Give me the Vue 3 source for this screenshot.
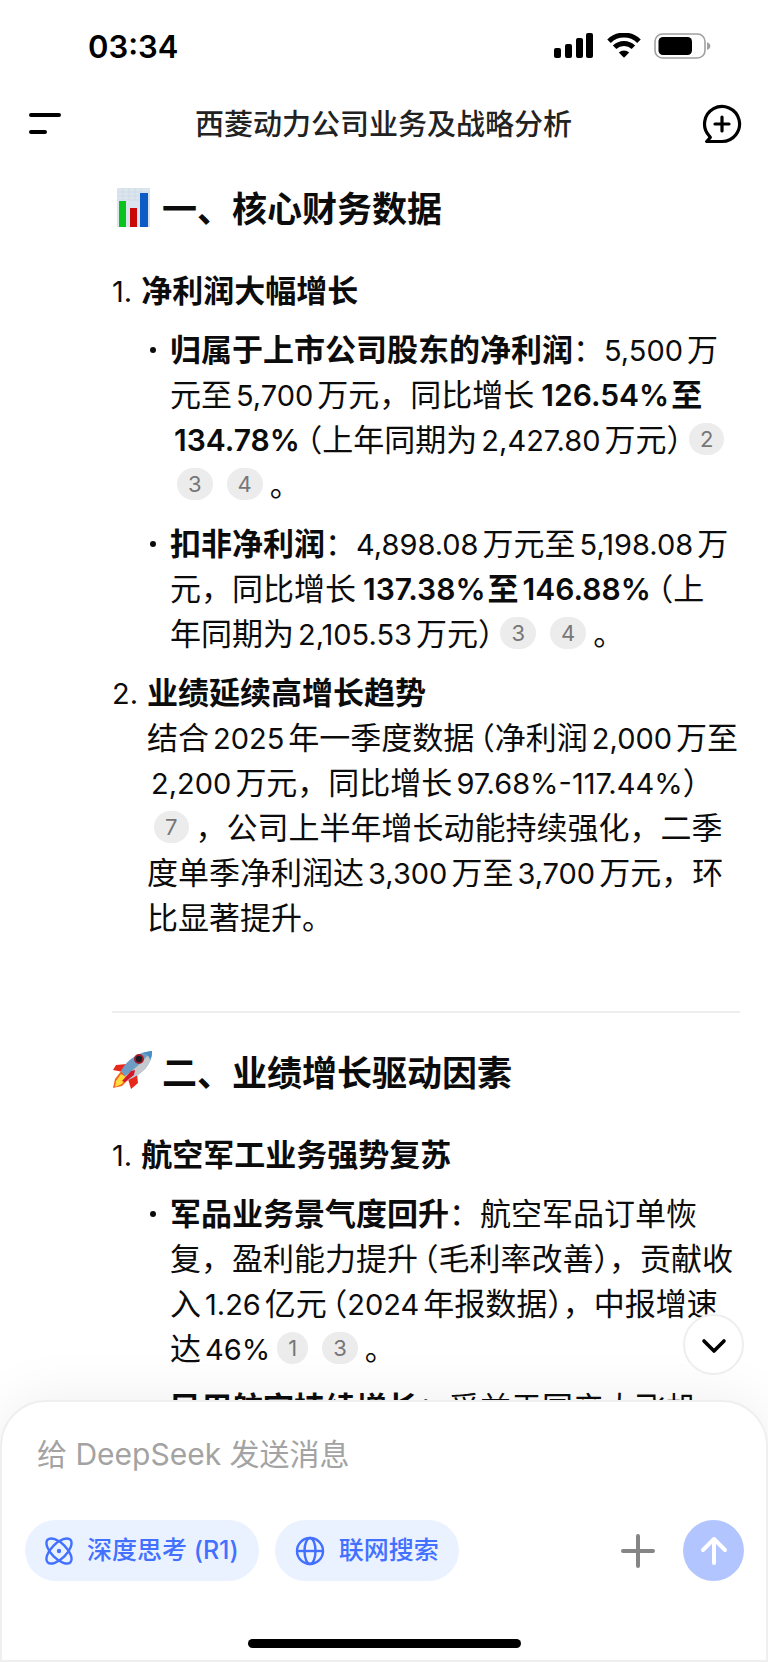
<script setup>
import { ref } from 'vue'

const draft = ref('')
</script>

<template>
  <div class="screen">
    <div class="status">
      <span class="time">03:34</span>
      <div class="indicators">
        <svg width="40" height="26" viewBox="0 0 40 26" aria-hidden="true">
          <rect x="0" y="15" width="7" height="10" rx="2" />
          <rect x="11" y="11" width="7" height="14" rx="2" />
          <rect x="22" y="5" width="7" height="20" rx="2" />
          <rect x="32" y="0" width="7" height="25" rx="2" />
        </svg>
        <svg width="36" height="26" viewBox="0 0 36 26" aria-hidden="true">
          <path d="M3 8.2a21.5 21.5 0 0 1 30 0M8.6 14.2a13.5 13.5 0 0 1 18.8 0" fill="none" stroke="#000" stroke-width="5" />
          <path d="M18 24.8l-5.2-5.2a7.6 7.6 0 0 1 10.4 0z" />
        </svg>
        <svg width="58" height="26" viewBox="0 0 58 26" aria-hidden="true">
          <rect x="1" y="1" width="50" height="24" rx="7.5" fill="none" stroke="#a0a0a0" stroke-width="1.6" />
          <rect x="4.5" y="4" width="33.5" height="18" rx="4.5" />
          <path d="M53 9.2c4.5 1.5 4.5 6.1 0 7.6z" fill="#a0a0a0" />
        </svg>
      </div>
    </div>

    <header class="topbar">
      <button type="button" class="icon-button" aria-label="菜单">
        <svg width="34" height="40" viewBox="0 0 34 40" aria-hidden="true">
          <path d="M3 11h28M3 28h14" stroke="#000" stroke-width="4" stroke-linecap="round" />
        </svg>
      </button>
      <h1>西菱动力公司业务及战略分析</h1>
      <button type="button" class="icon-button" aria-label="新对话">
        <svg width="40" height="40" viewBox="0 0 40 40" fill="none" stroke="#000" stroke-width="3.2" stroke-linejoin="round" aria-hidden="true">
          <path d="M20 37.500A17.500 17.500 0 1 0 7.300 32l1 1.500-3.600 4H20z" />
          <path d="M20 13v14M13 20h14" stroke-linecap="round" />
        </svg>
      </button>
    </header>

    <main class="chat">
      <section>
        <h2>
          <svg width="40" height="42" viewBox="0 -2 40 42" aria-hidden="true">
            <rect x="5" y="1" width="33" height="39" fill="#dbe5ee" />
            <path d="M5 5h33M5 9h33M5 13h33M11 1v13M17 1v13M23 1v13M29 1v13" stroke="#d0dbe6" stroke-width="1" />
            <rect x="7" y="14" width="7" height="26" fill="#0ac41d" />
            <rect x="18" y="21" width="7" height="19" fill="#c90a0a" />
            <rect x="28" y="6" width="8" height="34" fill="#0d5bc6" />
          </svg>
          <span>一、核心财务数据</span>
        </h2>
        <ol>
          <li>
            <span class="marker">1.</span>
            <strong>净利润大幅增长</strong>
          </li>
        </ol>
        <ul>
          <li><strong>归属于上市公司股东的净利润</strong>：<span class="n tight-start">5,500</span>万元至<span class="n">5,700</span>万元，同比增长 <strong><span class="n tight-start">126.54%</span>至<span class="n">134.78%</span></strong><span class="open">（</span>上<span class="keep">年同期</span>为<span class="n">2,427.80</span>万元<span class="close">）</span><a href="#ref-2" class="cite">2</a><a href="#ref-3" class="cite">3</a><a href="#ref-4" class="cite">4</a>。</li>
          <li><strong>扣非净利润</strong>：<span class="n tight-start">4,898.08</span>万元至<span class="n">5,198.08</span>万元，同比增长 <strong><span class="n tight-start">137.38%</span>至<span class="n">146.88%</span></strong><span class="open">（</span>上<span class="keep">年同期</span>为<span class="n">2,105.53</span>万元<span class="close">）</span><a href="#ref-3" class="cite">3</a><a href="#ref-4" class="cite">4</a>。</li>
        </ul>
        <ol start="2">
          <li>
            <span class="marker">2.</span>
            <div>
              <strong>业绩延续高增长趋势</strong>
              <p>结合<span class="n">2025</span>年一季度数据<span class="open">（</span>净利润<span class="n">2,000</span>万至<span class="n">2,200</span>万元，同比增长<span class="n tight-end">97.68%-117.44%</span><span class="close">）</span><a href="#ref-7" class="cite">7</a>，公司上半年增长动能持续强化，二季度单季净利润达<span class="n">3,300</span>万至<span class="n">3,700</span>万元，环比显著提升。</p>
            </div>
          </li>
        </ol>
      </section>

      <hr />

      <section>
        <h2>
          <svg width="40" height="40" viewBox="0 0 40 40" aria-hidden="true">
            <path d="M15 14L4 15 1 20l10 2zM25 24l1 9-7 6-3-10z" fill="#e8281c" />
            <path d="M10 20L3 29 1 38l9-2 8-8z" fill="#f4611e" />
            <path d="M9 24L4 31l-1 6 7-3 4-7z" fill="#ffdc3c" />
            <path d="M9 21C15 9 27 2 40 1c0 13-9 23-24 29z" fill="#6f9cc4" />
            <path d="M13 26C22 20 32 10 40 1c0 13-9 23-24 29z" fill="#c3c9cd" />
            <path d="M31 3c3-1 6-2 9-2 0 3 0 6-2 9-1-4-3-6-7-7z" fill="#4a8fc4" />
            <path d="M10 31l9-10 4-1-1 5-9 7z" fill="#d3182a" />
            <circle cx="27" cy="9" r="5" fill="#a81e2a" />
            <circle cx="27" cy="9" r="3.2" fill="#1c1c24" />
          </svg>
          <span>二、业绩增长驱动因素</span>
        </h2>
        <ol>
          <li>
            <span class="marker">1.</span>
            <strong>航空军工业务强势复苏</strong>
          </li>
        </ol>
        <ul>
          <li><strong>军品业务景气度回升</strong>：航空军品订单恢复，盈利能力提升<span class="open">（</span>毛利率改善<span class="close">）</span>，贡献收入<span class="n">1.26</span>亿元<span class="open">（</span><span class="n tight-start">2024</span>年报数据<span class="close">）</span>，中报增速达<span class="n tight-end">46%</span><a href="#ref-1" class="cite">1</a><a href="#ref-3" class="cite">3</a>。</li>
          <li><strong>民用航空持续增长</strong>：受益于国产大飞机</li>
        </ul>
      </section>
    </main>

    <footer class="composer">
      <button type="button" class="to-bottom" aria-label="滚动到底部">
        <svg width="28" height="28" viewBox="0 0 28 28" fill="none" stroke="#000" stroke-width="3.6" stroke-linecap="round" stroke-linejoin="round" aria-hidden="true">
          <path d="M4 10l10 10 10-10" />
        </svg>
      </button>
      <input v-model="draft" type="text" placeholder="给 DeepSeek 发送消息" aria-label="给 DeepSeek 发送消息" />
      <div class="tools">
        <button type="button" class="chip">
          <svg width="28" height="28" viewBox="0 0 28 28" fill="none" stroke="#4270ff" stroke-width="2.4" aria-hidden="true">
            <ellipse cx="14" cy="14" rx="16" ry="7.6" transform="rotate(45 14 14)" />
            <ellipse cx="14" cy="14" rx="16" ry="7.6" transform="rotate(-45 14 14)" />
            <circle cx="14" cy="14" r="2.2" fill="#4270ff" stroke="none" />
          </svg>
          <span>深度思考 (R1)</span>
        </button>
        <button type="button" class="chip">
          <svg width="30" height="30" viewBox="0 0 30 30" fill="none" stroke="#4270ff" stroke-width="2.4" aria-hidden="true">
            <circle cx="15" cy="15" r="13" />
            <ellipse cx="15" cy="15" rx="5.5" ry="13" />
            <path d="M2 15h26" />
          </svg>
          <span>联网搜索</span>
        </button>
        <button type="button" class="plus" aria-label="添加">
          <svg width="34" height="34" viewBox="0 0 34 34" stroke="#858585" stroke-width="4" stroke-linecap="round" aria-hidden="true">
            <path d="M17 2v30M2 17h30" />
          </svg>
        </button>
        <button type="button" class="send" aria-label="发送">
          <svg width="30" height="30" viewBox="0 0 30 30" fill="none" stroke="#fff" stroke-width="4" stroke-linecap="round" stroke-linejoin="round" aria-hidden="true">
            <path d="M15 27V3M4 14L15 3l11 11" />
          </svg>
        </button>
      </div>
      <div class="home-bar"></div>
    </footer>
  </div>
</template>

<style>
body {
  background: #fff;
}
</style>

<style scoped>
.screen {
  display: flex;
  flex-direction: column;
  height: 100vh;
  overflow: hidden;
  box-sizing: border-box;
  background: #fff;
  color: #0c0c0c;
  font-family: "Noto Sans CJK SC", sans-serif;
  font-size: 31px;
  line-height: 45px;
}

button {
  display: flex;
  align-items: center;
  justify-content: center;
  padding: 0;
  border: 0;
  background: none;
  font: inherit;
  color: inherit;
}

.status {
  display: flex;
  flex-shrink: 0;
  align-items: center;
  justify-content: space-between;
  height: 92px;
  padding: 0 56px 0 88px;
}

.time {
  font-family: Inter, sans-serif;
  font-size: 31px;
  font-weight: 600;
  color: #000;
}

.indicators {
  display: flex;
  gap: 12px;
}

.topbar {
  display: flex;
  flex-shrink: 0;
  align-items: center;
  justify-content: space-between;
  height: 64px;
  padding: 0 26px 0 25px;
}

.topbar h1 {
  margin: 0;
  padding-bottom: 3px;
  font-size: 29px;
  font-weight: 500;
  color: #222;
}

.icon-button {
  width: 40px;
  height: 40px;
}

.chat {
  flex: 1;
  min-height: 0;
  overflow: hidden;
  padding: 26px 28px 0 112px;
}

h2 {
  display: flex;
  align-items: center;
  gap: 10px;
  height: 48px;
  margin: 0 0 36px;
  font-size: 35px;
  font-weight: 700;
}

ol,
ul,
p {
  margin: 0;
  padding: 0;
  list-style: none;
}

ol > li {
  display: flex;
  align-items: baseline;
  gap: 9px;
}

ol,
ul > li {
  margin-bottom: 14px;
}

.marker,
.n {
  font-family: Inter, sans-serif;
  font-size: 29px;
  line-height: 1;
}

strong {
  font-weight: 700;
}

.n {
  margin: 0 4px;
  white-space: nowrap;
}

strong .n {
  margin-right: 2px;
  font-size: 30px;
  font-weight: 600;
}

.n.tight-start {
  margin-left: 0;
}

.n.tight-end {
  margin-right: 0;
}

.keep {
  white-space: nowrap;
}

ul {
  padding-left: 58px;
}

ul > li::before {
  content: "";
  float: left;
  width: 6px;
  height: 6px;
  margin: 22px 0 0 -20px;
  border-radius: 50%;
  background: #0c0c0c;
}

.open,
.close {
  font-feature-settings: "halt";
}

.open {
  margin-left: 5px;
}

.cite {
  display: inline-flex;
  align-items: center;
  justify-content: center;
  height: 32px;
  margin: 0 7px;
  padding: 0 11px;
  border-radius: 16px;
  background: #ececec;
  color: #777;
  font-family: Inter, sans-serif;
  font-size: 22px;
  line-height: 32px;
  text-decoration: none;
  vertical-align: 4px;
}

hr {
  height: 2px;
  margin: 73px 0 33px;
  border: 0;
  background: #eee;
}

.composer {
  position: relative;
  flex-shrink: 0;
  padding: 28px 22px 12px 23px;
  border: 2px solid #efefef;
  border-radius: 46px 46px 0 0;
  background: #fff;
  box-shadow: 0 0 60px rgba(0, 0, 0, 0.07);
}

.to-bottom {
  position: absolute;
  top: -88px;
  right: 22px;
  width: 61px;
  height: 61px;
  border: 2px solid #eee;
  border-radius: 50%;
  background: #fff;
}

input {
  display: block;
  box-sizing: border-box;
  width: 100%;
  height: 48px;
  padding: 0 12px;
  border: 0;
  outline: 0;
  background: none;
  font-family: Inter, "Noto Sans CJK SC", sans-serif;
  font-size: 30px;
  color: inherit;
}

input::placeholder {
  color: #a3a3a3;
  opacity: 1;
}

.tools {
  display: flex;
  align-items: center;
  gap: 16px;
  margin-top: 42px;
}

.chip {
  gap: 14px;
  height: 61px;
  padding: 0 20px;
  border-radius: 31px;
  background: #ebf2ff;
  color: #4270ff;
  font-family: Inter, "Noto Sans CJK SC", sans-serif;
  font-size: 25px;
  font-weight: 500;
}

.plus {
  margin: 0 12px 0 auto;
}

.send {
  width: 61px;
  height: 61px;
  border-radius: 50%;
  background: #b2c5ff;
}

.home-bar {
  width: 38%;
  height: 9px;
  margin: 58px auto 0;
  border-radius: 5px;
  background: #000;
}
</style>
